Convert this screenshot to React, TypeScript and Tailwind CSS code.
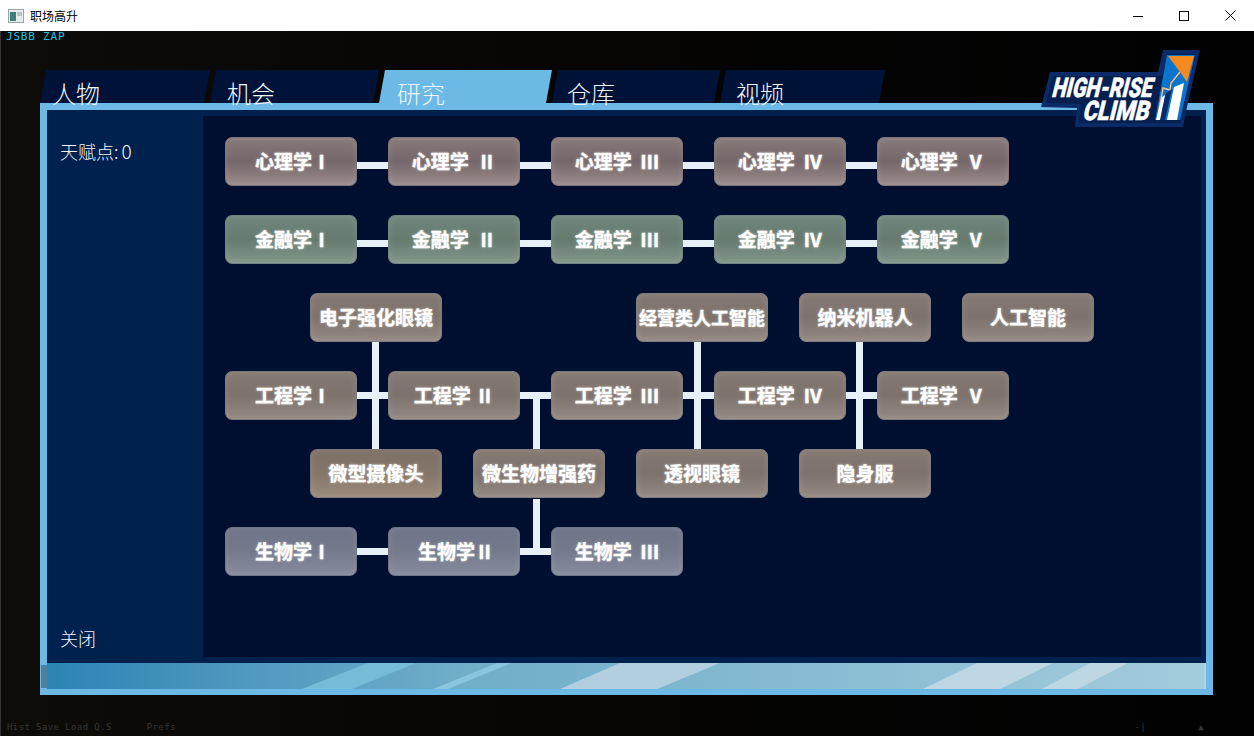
const cjk = "font-['Noto_Sans_CJK_SC','Noto_Sans',sans-serif]";

const tones = {
  psy: "border-[#7d7578] from-[#887a7a] via-[#75676a] to-[#9b8b8c]",
  fin: "border-[#6f8380] from-[#70857b] via-[#667a70] to-[#83968b]",
  eng: "border-[#7f7c80] from-[#857a72] via-[#7d726c] to-[#948a82]",
  gad: "border-[#80787a] from-[#7d7066] via-[#85766a] to-[#9b8b7e]",
  bio: "border-[#6f7689] from-[#6f7588] via-[#747a8c] to-[#868c9c]",
};

type Tone = keyof typeof tones;

function Node({ label, tone, small }: { label: string; tone: Tone; small?: boolean }) {
  return (
    <div
      className={`w-[132px] h-[49px] shrink-0 flex items-center justify-center rounded-[7px] border bg-gradient-to-b ${tones[tone]} shadow-[inset_0_0_6px_rgba(255,255,255,0.12)] ${cjk} font-bold whitespace-pre text-white [text-shadow:0_0_3px_rgba(255,255,255,0.55)] [-webkit-text-stroke:0.35px_#ffffff] ${small ? "text-[18px]" : "text-[19px]"}`}
    >
      {label}
    </div>
  );
}

function Link({ low }: { low?: boolean }) {
  return <div className={`w-[31px] h-[7px] shrink-0 bg-[#e6f0f8] ${low ? "mt-[7px]" : ""}`} />;
}

function Row({ labels, tone, low }: { labels: string[]; tone: Tone; low?: boolean }) {
  return (
    <div className="flex items-center">
      {labels.map((l, i) => (
        <div key={l} className="flex items-center">
          {i > 0 && <Link low={low} />}
          <Node label={l} tone={tone} />
        </div>
      ))}
    </div>
  );
}

const tabs = [
  { name: "人物", w: "w-[170px]", pl: "pl-[12px]" },
  { name: "机会", w: "w-[169px]", pl: "pl-[17px]" },
  { name: "研究", w: "w-[173px]", pl: "pl-[18px]", active: true },
  { name: "仓库", w: "w-[168px]", pl: "pl-[15px]" },
  { name: "视频", w: "w-[165px]", pl: "pl-[16px]" },
];

function Logo() {
  const word = {
    fontFamily: "Roboto, 'Liberation Sans', sans-serif",
    fontWeight: 900,
    fontSize: 27,
    lengthAdjust: "spacingAndGlyphs",
    fill: "#ffffff",
    stroke: "#ffffff",
    strokeWidth: 0.5,
  } as const;
  return (
    <svg className="absolute left-[1040px] top-[49px] z-20" width="162" height="80" viewBox="0 0 162 80">
      <polygon points="123,1 160,1 147,58 143,78 35,78 37,59 1,58 10,23 118,23" fill="#0a2a68" />
      <polygon points="128,5 156,5 143,57 140,74 39,74 41,55 6,54 13,27 122,27" fill="#05204f" />
      <polygon points="127,6 155,6 140,71 115,71" fill="#0b74cc" />
      <polygon points="128,7 154,7 147,33 140,23" fill="#f78a1e" />
      <polyline points="140,23 131,34 130,41 123,39 117,71" fill="none" stroke="#f3c088" strokeWidth="1.4" />
      <polygon points="126,44 132,40 125,71 119,71" fill="#0a2a68" />
      <polygon points="134,38 144,34 137,71 127,71" fill="#ffffff" />
      <polygon points="122,48 125,46 120,71 116,71" fill="#ffffff" />
      <g transform="translate(11 48) skewX(-14)">
        <text x="0" y="0" textLength="100" {...word}>
          HIGH-RISE
        </text>
      </g>
      <g transform="translate(42 71) skewX(-14)">
        <text x="0" y="0" textLength="66" {...word}>
          CLIMB
        </text>
      </g>
    </svg>
  );
}

function BottomBar() {
  // stripe coordinates are relative to the bar's left edge (page x 47)
  return (
    <div className="relative h-[26px] shrink-0 bg-gradient-to-r from-[#2b84b5] via-[#6fadc9] via-35% to-[#a3ccdc]">
      <div className="absolute -left-[6px] top-[2px] h-[23px] w-[6px] bg-[#4f7f9e]" />
      <svg className="absolute inset-0" width="1159" height="26" viewBox="0 0 1159 26">
        <polygon points="255,26 305,26 369,0 321,0" fill="#76bbd8" />
        <polygon points="386,26 401,26 465,0 450,0" fill="#89c5de" />
        <polygon points="513,26 610,26 673,0 573,0" fill="#b2cfe0" />
        <polygon points="876,26 953,26 1006,0 930,0" fill="#bdd7e4" />
        <polygon points="995,26 1031,26 1081,0 1043,0" fill="#bdd7e4" />
        <rect x="1157" y="0" width="2" height="26" fill="#aed4e3" />
      </svg>
    </div>
  );
}

export default function App() {
  return (
    <div className={`relative w-[1254px] h-[736px] overflow-hidden flex flex-col bg-gradient-to-r from-[#0e0c09] via-[#060504] to-[#020202] shadow-[inset_1px_0_0_#333333] ${cjk}`}>
      {/* window title bar */}
      <div className="h-[31px] shrink-0 bg-white flex items-center pl-[8px] pr-[1px]">
        <svg width="16" height="14" viewBox="0 0 16 14">
          <rect x="0.5" y="0.5" width="15" height="13" fill="#e8ecec" stroke="#9aa5a5" />
          <rect x="2" y="3" width="6" height="9" fill="#3f7f7c" />
          <rect x="9" y="3" width="5" height="4" fill="#b8c4c4" />
        </svg>
        <span className="ml-[6px] text-[12px] text-black">职场高升</span>
        <div className="ml-auto flex items-center">
          <div className="w-[46px] h-[31px] flex items-center justify-center">
            <svg width="10" height="10" viewBox="0 0 10 10">
              <line x1="0" y1="5.5" x2="10" y2="5.5" stroke="#000" />
            </svg>
          </div>
          <div className="w-[46px] h-[31px] flex items-center justify-center">
            <svg width="10" height="10" viewBox="0 0 10 10">
              <rect x="0.5" y="0.5" width="9" height="9" fill="none" stroke="#000" />
            </svg>
          </div>
          <div className="w-[46px] h-[31px] flex items-center justify-center">
            <svg width="11" height="11" viewBox="0 0 11 11">
              <path d="M0.5 0.5 L10.5 10.5 M10.5 0.5 L0.5 10.5" stroke="#000" fill="none" />
            </svg>
          </div>
        </div>
      </div>

      <div className="h-[12px] shrink-0 pl-[6px] font-['DejaVu_Sans_Mono',monospace] text-[11px] leading-[12px] tracking-[0.8px] text-[#17c5e8]">
        JSBB ZAP
      </div>

      <div className="ml-[40px] mt-[27px] w-[1173px]">
        <div className="relative z-10 flex h-[33px]">
          {tabs.map((t) => (
            <div key={t.name} className={`relative h-[33px] ${t.w} ${t.pl}`}>
              <div
                className={`absolute inset-0 [clip-path:polygon(6px_0,100%_0,calc(100%-6px)_100%,0_100%)] ${t.active ? "bg-[#6cb9e6]" : "bg-[#001238]"}`}
              />
              <span className="relative block pt-[8px] text-[24px] leading-[30px] font-light text-[#eef6fb]">{t.name}</span>
            </div>
          ))}
        </div>

        <div className="h-[592px] border-x-[7px] border-t-[7px] border-b-[6px] border-[#6cb9e6] flex flex-col">
          <div className="flex-1 min-h-0 flex bg-[#00204e]">
            <div className="w-[156px] shrink-0 flex flex-col justify-between pl-[13px] pt-[29px] pb-[13px] text-[18px] leading-[24px] font-light text-[#f2f6fa]">
              <div>
                天赋点:<span className="ml-[3px] text-[19px]">0</span>
              </div>
              <div>关闭</div>
            </div>
            <div className="flex-1 min-w-0 pt-[6px] pr-[5px] pb-[6px]">
              <div className="h-full bg-[#000f30] pl-[22px] pt-[21px]">
                <div className="relative flex flex-col gap-[29px]">
                  {/* vertical connectors run behind the row nodes */}
                  <div className="absolute left-[147px] top-[205px] w-[7px] h-[107px] bg-[#e6f0f8]" />
                  <div className="absolute left-[308px] top-[261px] w-[7px] h-[51px] bg-[#e6f0f8]" />
                  <div className="absolute left-[308px] top-[362px] w-[7px] h-[52px] bg-[#e6f0f8]" />
                  <div className="absolute left-[469px] top-[205px] w-[7px] h-[107px] bg-[#e6f0f8]" />
                  <div className="absolute left-[631px] top-[205px] w-[7px] h-[107px] bg-[#e6f0f8]" />

                  <Row tone="psy" low labels={["\u2009心理学Ⅰ", "心理学  Ⅱ", "心理学  Ⅲ", "心理学  Ⅳ", "心理学  Ⅴ"]} />
                  <Row tone="fin" low labels={["\u2009金融学Ⅰ", "金融学  Ⅱ", "金融学  Ⅲ", "金融学  Ⅳ", "金融学  Ⅴ"]} />

                  <div className="relative flex gap-[31px] pl-[85px]">
                    <Node label="电子强化眼镜" tone="eng" />
                    <div className="w-[132px] shrink-0" />
                    <Node label="经营类人工智能" tone="eng" small />
                    <Node label="纳米机器人" tone="eng" />
                    <Node label="人工智能" tone="eng" />
                  </div>

                  <Row tone="eng" labels={["\u2009工程学Ⅰ", "工程学 Ⅱ", "工程学  Ⅲ", "工程学  Ⅳ", "工程学  Ⅴ"]} />

                  <div className="relative flex gap-[31px] pl-[85px]">
                    <Node label="微型摄像头" tone="gad" />
                    <Node label="微生物增强药" tone="eng" />
                    <Node label="透视眼镜" tone="eng" />
                    <Node label="隐身服" tone="eng" />
                  </div>

                  <Row tone="bio" labels={["\u2009生物学Ⅰ", "\u2009生物学Ⅱ", "生物学  Ⅲ"]} />
                </div>
              </div>
            </div>
          </div>
          <BottomBar />
        </div>
      </div>

      <div className="mt-[26px] flex pl-[7px] pr-[50px] font-['DejaVu_Sans_Mono',monospace] text-[9px] leading-[12px] tracking-[0.4px] text-[#363636]">
        <span>Hist Save Load Q.S</span>
        <span className="ml-[35px]">Prefs</span>
        <span className="ml-auto">-|</span>
        <span className="ml-[52px]">▲</span>
      </div>

      <Logo />
    </div>
  );
}
